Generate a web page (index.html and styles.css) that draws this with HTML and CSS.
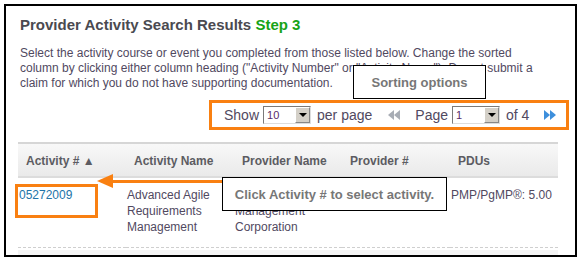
FILE: index.html
```html
<!DOCTYPE html>
<html lang="en">
<head>
    <meta charset="UTF-8">
    <title>Provider Activity Search Results</title>
    <link rel="stylesheet" href="styles.css">
</head>
<body>
    <div class="frame">
        <h2 class="title">Provider Activity Search Results <span class="step">Step 3</span></h2>
        <p class="intro">Select the activity course or event you completed from those listed below. Change the sorted<br>
            column by clicking either column heading ("Activity Number" or "Activity Name"). Do not submit a<br>
            claim for which you do not have supporting documentation.</p>

        <div class="pager">
            <span class="lbl">Show</span>
            <span class="fake-select"><span class="val">10</span><span class="btn"></span></span>
            <span class="lbl">per page</span>
            <span class="arrows prev"><i></i><i></i></span>
            <span class="lbl">Page</span>
            <span class="fake-select"><span class="val">1</span><span class="btn"></span></span>
            <span class="lbl">of 4</span>
            <span class="arrows next"><i></i><i></i></span>
        </div>

        <table class="results">
            <thead>
                <tr>
                    <th>Activity # &#9650;</th>
                    <th>Activity Name</th>
                    <th>Provider Name</th>
                    <th>Provider #</th>
                    <th>PDUs</th>
                </tr>
            </thead>
            <tbody>
                <tr>
                    <td><a href="#">05272009</a></td>
                    <td>Advanced Agile<br>Requirements<br>Management</td>
                    <td class="under-note">Management<br>Corporation</td>
                    <td></td>
                    <td>PMP/PgMP&reg;: 5.00</td>
                </tr>
            </tbody>
        </table>
        <div class="band"></div>

        <!-- annotations -->
        <div class="note sort-note">Sorting options</div>
        <div class="link-box"></div>
        <div class="arrow"><span class="head"></span><span class="shaft"></span></div>
        <div class="note click-note">Click Activity # to select activity.</div>
    </div>
</body>
</html>
```

FILE: styles.css
```css
body { margin: 0; padding: 4px; background: #fff; font-family: "Liberation Sans", Arial, sans-serif; }
.frame { position: relative; width: 543px; height: 249px; border: 2px solid #000; padding: 0 13px; overflow: hidden; }
.title { margin: 10px 0 0 1px; font-size: 15px; line-height: 18px; color: #4a4a50; }
.step { color: #17a317; }
.intro { margin: 12px 0 0 1px; font-size: 12px; line-height: 15px; color: #51495f; }

.pager { display: flex; align-items: center; width: 342px; height: 24px; margin: 9px -7px 0 auto; border: 3px solid #f98011; font-size: 14px; color: #51495f; padding-left: 12px; white-space: nowrap; }
.pager > span { flex-shrink: 0; }
.fake-select { display: inline-flex; width: 46px; height: 16px; border: 1px solid #7a7a7a; border-right-color: #ddd; border-bottom-color: #ddd; background: #fff; margin: 0 5px 0 4px; }
.fake-select .val { flex: 1; font-size: 11px; line-height: 16px; padding-left: 3px; color: #5a2a6a; }
.fake-select .btn { position: relative; width: 15px; background: #d4d0c8; border: 1px solid #888; border-top-color: #fff; border-left-color: #fff; box-sizing: border-box; }
.fake-select .btn::after { content: ""; position: absolute; left: 3px; top: 5px; border: 4px solid transparent; border-top: 4px solid #000; border-bottom: 0; }
.fake-select + .lbl { margin-left: 1px; }
.arrows { display: inline-flex; margin: 0 15px 0 16px; }
.arrows i { width: 0; height: 0; border-top: 5px solid transparent; border-bottom: 5px solid transparent; }
.prev i { border-right: 6px solid #a8adb5; }
.next i { border-left: 6px solid #3d8fdc; }
.pager .next { margin-left: 15px; }

.results { width: 540px; margin: 12px 0 0 -1px; border-collapse: collapse; table-layout: fixed; font-size: 12px; }
.results th { height: 34px; padding: 0 0 0 8px; text-align: left; color: #5c5c62; font-size: 12px; border-top: 2px solid #d6d6d6; background: linear-gradient(#f8f8f8, #e9e9e9); box-shadow: inset 0 -2px 0 #dcdcdc; }
.results td { vertical-align: top; padding: 9px 0 12px 1px; line-height: 16px; color: #51495f; border-bottom: 1px dashed #cfcfcf; }
.results td.under-note { padding-top: 25px; }
.results td a { color: #2274a8; text-decoration: none; font-size: 12px; }
.band { width: 540px; height: 7px; margin: 2px 0 0 -1px; background: #f4f4f4; }

.note { position: absolute; box-sizing: border-box; border: 1.5px solid #000; background: #fff; color: #777; font-weight: bold; font-size: 13px; display: flex; align-items: center; justify-content: center; }
.sort-note { left: 347px; top: 59px; width: 133px; height: 34px; }
.click-note { left: 216px; top: 171px; width: 225px; height: 34px; }
.link-box { position: absolute; left: 9px; top: 178px; width: 83px; height: 34px; box-sizing: border-box; border: 3px solid #f98011; }
.arrow { position: absolute; left: 91px; top: 168px; display: flex; align-items: center; }
.arrow .head { width: 0; height: 0; border-top: 7px solid transparent; border-bottom: 7px solid transparent; border-right: 16px solid #f98011; }
.arrow .shaft { width: 112px; height: 3px; background: #f98011; }
```
